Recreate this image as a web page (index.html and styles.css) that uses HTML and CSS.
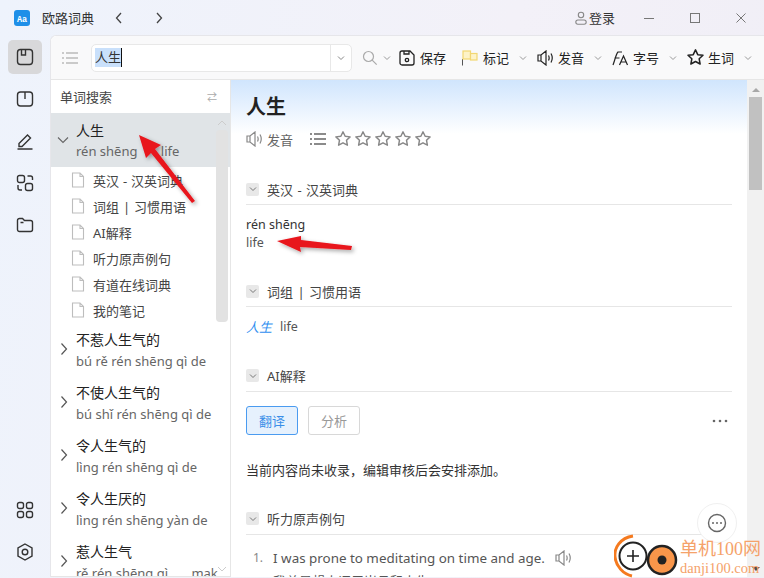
FILE: index.html
```html
<!DOCTYPE html>
<html lang="zh">
<head>
  <meta charset="UTF-8" />
  <title>欧路词典</title>
  <link rel="stylesheet" href="styles.css">
</head>
<body>
  <svg class="defs" width="0" height="0">
    <symbol id="star" viewBox="0 0 16 16"><path d="M8 1.600l1.900 4 4.400.5-3.200 3 .8 4.400L8 11.400l-3.900 2.100.8-4.400-3.200-3 4.400-.5z" fill="none" stroke="currentColor" stroke-width="1.300" stroke-linejoin="round"/></symbol>
    <symbol id="chev" viewBox="0 0 10 10"><path d="M2 3.500l3 3 3-3" fill="none" stroke="currentColor" stroke-width="1"/></symbol>
    <symbol id="doc" viewBox="0 0 14 16"><path d="M1.500 1h7.500l3.500 3.500v10.500h-11z M9 1v3.500h3.500" fill="none" stroke="#bdbdbd" stroke-width="1.100"/></symbol>
    <symbol id="right" viewBox="0 0 10 14"><path d="M2.500 1.500l5 5.500-5 5.500" fill="none" stroke="#555" stroke-width="1.200"/></symbol>
    <symbol id="speaker" viewBox="0 0 17 16"><path d="M1 5h3l5-4v14l-5-4H1z M4 5v6 M11.500 5.500c.8 1.500.8 3.500 0 5 M14 3.500c1.500 2.700 1.500 6.300 0 9" fill="none" stroke="currentColor" stroke-width="1.200"/></symbol>
  </svg>

  <header class="titlebar">
    <svg class="logo" width="16" height="16" viewBox="0 0 16 16"><rect width="16" height="16" rx="3" fill="#1e8fe8"/><text x="8" y="11.500" font-size="8.500" font-family="Liberation Mono" font-weight="700" text-anchor="middle" fill="#fff">Aa</text></svg>
    <span class="app-name">欧路词典</span>
    <svg class="nav-arrow first" width="10" height="14" viewBox="0 0 10 14"><path d="M7 2l-4.500 5 4.500 5" fill="none" stroke="#444" stroke-width="1.300"/></svg>
    <svg class="nav-arrow" width="10" height="14" viewBox="0 0 10 14"><path d="M3 2l4.500 5-4.500 5" fill="none" stroke="#444" stroke-width="1.300"/></svg>
    <span class="spacer"></span>
    <svg width="14" height="14" viewBox="0 0 14 14"><circle cx="7" cy="4" r="2.700" fill="none" stroke="#888" stroke-width="1.100"/><rect x="1.800" y="9" width="10.400" height="4.200" rx="2.100" fill="none" stroke="#888" stroke-width="1.100"/></svg>
    <span class="login">登录</span>
    <svg class="win-btn" width="12" height="12" viewBox="0 0 12 12"><path d="M1 6.500h10" stroke="#777" stroke-width="1"/></svg>
    <svg class="win-btn" width="12" height="12" viewBox="0 0 12 12"><rect x="1.500" y="1.500" width="9" height="9" fill="none" stroke="#777" stroke-width="1"/></svg>
    <svg class="win-btn" width="12" height="12" viewBox="0 0 12 12"><path d="M1.500 1.500l9 9M10.500 1.500l-9 9" stroke="#777" stroke-width="1"/></svg>
  </header>

  <div class="shell">
    <nav class="rail">
      <div class="rail-btn active"><svg width="18" height="18" viewBox="0 0 18 18"><rect x="1.500" y="1.500" width="15" height="15" rx="3" fill="none" stroke="#333" stroke-width="1.400"/><path d="M5.500 2v5h4V2" fill="none" stroke="#333" stroke-width="1.400"/></svg></div>
      <div class="rail-btn"><svg width="18" height="18" viewBox="0 0 18 18"><rect x="1.500" y="2" width="15" height="14" rx="3" fill="none" stroke="#333" stroke-width="1.400"/><path d="M9 2v7" stroke="#333" stroke-width="1.400"/></svg></div>
      <div class="rail-btn"><svg width="18" height="18" viewBox="0 0 18 18"><path d="M3 11.500L11.500 3l3 3L6 14.500H3z M1.500 17h15" fill="none" stroke="#333" stroke-width="1.400"/></svg></div>
      <div class="rail-btn"><svg width="18" height="18" viewBox="0 0 18 18"><rect x="1.500" y="1.500" width="7" height="7" rx="2" fill="none" stroke="#333" stroke-width="1.400"/><path d="M11.500 2h3a2 2 0 0 1 2 2v2 M2 11v3a2 2 0 0 0 2 2h2" fill="none" stroke="#333" stroke-width="1.400"/><rect x="9.500" y="9.500" width="7" height="7" rx="2" fill="none" stroke="#333" stroke-width="1.400"/></svg></div>
      <div class="rail-btn"><svg width="18" height="18" viewBox="0 0 18 18"><path d="M1.500 4.500a2 2 0 0 1 2-2h3l2 2h6a2 2 0 0 1 2 2v7a2 2 0 0 1-2 2h-11a2 2 0 0 1-2-2z M4.500 6.500h3" fill="none" stroke="#333" stroke-width="1.400"/></svg></div>
      <div class="spacer"></div>
      <div class="rail-btn"><svg width="18" height="18" viewBox="0 0 18 18"><g fill="none" stroke="#333" stroke-width="1.400"><rect x="1.500" y="1.500" width="6" height="6" rx="2"/><rect x="10.500" y="1.500" width="6" height="6" rx="2"/><rect x="1.500" y="10.500" width="6" height="6" rx="2"/><rect x="10.500" y="10.500" width="6" height="6" rx="2"/></g></svg></div>
      <div class="rail-btn"><svg width="18" height="18" viewBox="0 0 18 18"><path d="M9 1l7 4v8l-7 4-7-4V5z" fill="none" stroke="#333" stroke-width="1.400"/><circle cx="9" cy="9" r="2.800" fill="none" stroke="#333" stroke-width="1.400"/></svg></div>
    </nav>

    <main class="panel">
      <div class="toolbar">
        <svg class="list-icon" width="16" height="12" viewBox="0 0 16 12"><path d="M0 1h2M4 1h12M0 6h2M4 6h12M0 11h2M4 11h12" stroke="#bbb" stroke-width="1.300"/></svg>
        <div class="search">
          <span class="search-text"><span class="sel">人生</span></span>
          <span class="search-drop"><svg width="10" height="10"><use href="#chev"/></svg></span>
        </div>
        <svg class="magnifier" width="16" height="16" viewBox="0 0 16 16"><circle cx="6.500" cy="6.500" r="5" fill="none" stroke="#aaa" stroke-width="1.200"/><path d="M10.200 10.200l4.500 4.500" stroke="#aaa" stroke-width="1.200"/></svg>
        <svg class="search-chev" width="10" height="10"><use href="#chev"/></svg>
        <div class="tool tool-save"><svg width="16" height="16" viewBox="0 0 16 16"><path d="M1 3a2 2 0 0 1 2-2h8l4 4v8a2 2 0 0 1-2 2H3a2 2 0 0 1-2-2z M5 1v3h5V1" fill="none" stroke="#222" stroke-width="1.300"/><circle cx="8" cy="10" r="1.700" fill="none" stroke="#222" stroke-width="1.300"/></svg><span>保存</span></div>
        <div class="tool"><svg width="16" height="16" viewBox="0 0 16 16"><path d="M.5 9v6.500" stroke="#555" stroke-width="1"/><rect x="1" y="1" width="7.500" height="8" fill="#fdf3c8" stroke="#f2d772" stroke-width="1.200"/><rect x="8.500" y="3.500" width="6.500" height="6.500" fill="#fdf3c8" stroke="#f2d772" stroke-width="1.200"/></svg><span>标记</span></div>
        <svg class="tool-chev" width="10" height="10"><use href="#chev"/></svg>
        <div class="tool"><svg width="17" height="16" class="dark"><use href="#speaker"/></svg><span>发音</span></div>
        <svg class="tool-chev" width="10" height="10"><use href="#chev"/></svg>
        <div class="tool"><svg width="17" height="16" viewBox="0 0 17 16"><path d="M1 15C3 10 4 4 6 2h4 M2.500 8h5 M7.500 15l4-9 4 9 M9 12h5" fill="none" stroke="#222" stroke-width="1.200"/></svg><span>字号</span></div>
        <svg class="tool-chev" width="10" height="10"><use href="#chev"/></svg>
        <div class="tool tool-star"><svg width="19" height="19" class="dark"><use href="#star"/></svg><span>生词</span></div>
        <svg class="tool-chev" width="10" height="10"><use href="#chev"/></svg>
      </div>

      <div class="columns">
        <aside class="sidebar">
          <div class="side-head"><span>单词搜索</span><span class="swap">⇄</span></div>
          <div class="word-list">
            <div class="word open">
              <svg class="arrow-down" width="12" height="12" viewBox="0 0 12 12"><path d="M1 3.500l5 5 5-5" fill="none" stroke="#666" stroke-width="1.100"/></svg>
              <div class="word-title">人生</div>
              <div class="word-sub">rén shēng <span class="gap">life</span></div>
            </div>
            <div class="sub-row"><svg width="14" height="16"><use href="#doc"/></svg>英汉 - 汉英词典</div>
            <div class="sub-row"><svg width="14" height="16"><use href="#doc"/></svg>词组 | 习惯用语</div>
            <div class="sub-row"><svg width="14" height="16"><use href="#doc"/></svg>AI解释</div>
            <div class="sub-row"><svg width="14" height="16"><use href="#doc"/></svg>听力原声例句</div>
            <div class="sub-row"><svg width="14" height="16"><use href="#doc"/></svg>有道在线词典</div>
            <div class="sub-row"><svg width="14" height="16"><use href="#doc"/></svg>我的笔记</div>
            <div class="word"><svg class="arrow-right" width="10" height="14"><use href="#right"/></svg><div class="word-title">不惹人生气的</div><div class="word-sub">bú rě rén shēng qì de</div></div>
            <div class="word"><svg class="arrow-right" width="10" height="14"><use href="#right"/></svg><div class="word-title">不使人生气的</div><div class="word-sub">bú shǐ rén shēng qì de</div></div>
            <div class="word"><svg class="arrow-right" width="10" height="14"><use href="#right"/></svg><div class="word-title">令人生气的</div><div class="word-sub">lìng rén shēng qì de</div></div>
            <div class="word"><svg class="arrow-right" width="10" height="14"><use href="#right"/></svg><div class="word-title">令人生厌的</div><div class="word-sub">lìng rén shēng yàn de</div></div>
            <div class="word"><svg class="arrow-right" width="10" height="14"><use href="#right"/></svg><div class="word-title">惹人生气</div><div class="word-sub">rě rén shēng qì <span class="gap-small">mak</span></div></div>
          </div>
          <div class="side-scroll">
            <svg class="scroll-up" width="10" height="10" viewBox="0 0 10 10"><path d="M1 7l4-4 4 4" fill="none" stroke="#ccc" stroke-width="1"/></svg>
            <div class="side-thumb"></div>
            <span class="spacer"></span>
            <svg width="10" height="10" viewBox="0 0 10 10"><path d="M1 3l4 4 4-4" fill="none" stroke="#ccc" stroke-width="1"/></svg>
          </div>
        </aside>

        <section class="content">
          <div class="content-inner">
            <h1 class="headword">人生</h1>
            <div class="head-tools">
              <svg width="17" height="16" class="grey"><use href="#speaker"/></svg>
              <span class="say">发音</span>
              <svg class="lines" width="16" height="12" viewBox="0 0 16 12"><path d="M0 1h2M4 1h12M0 6h2M4 6h12M0 11h2M4 11h12" stroke="#666" stroke-width="1.400"/></svg>
              <div class="stars">
                <svg width="18" height="18"><use href="#star"/></svg>
                <svg width="18" height="18"><use href="#star"/></svg>
                <svg width="18" height="18"><use href="#star"/></svg>
                <svg width="18" height="18"><use href="#star"/></svg>
                <svg width="18" height="18"><use href="#star"/></svg>
              </div>
            </div>

            <div class="sec-head first-sec"><span class="toggle"><svg width="10" height="10"><use href="#chev"/></svg></span>英汉 - 汉英词典</div>
            <div class="sec-body pron"><div>rén shēng</div><div class="life">life</div></div>

            <div class="sec-head"><span class="toggle"><svg width="10" height="10"><use href="#chev"/></svg></span>词组 | 习惯用语</div>
            <div class="sec-body phrase"><a class="phrase-link">人生</a><span class="life">life</span></div>

            <div class="sec-head ai-head"><span class="toggle"><svg width="10" height="10"><use href="#chev"/></svg></span>AI解释</div>
            <div class="ai-tabs">
              <span class="tab on">翻译</span>
              <span class="tab">分析</span>
              <span class="spacer"></span>
              <svg class="more" width="16" height="4" viewBox="0 0 16 4"><circle cx="2" cy="2" r="1.300" fill="#666"/><circle cx="8" cy="2" r="1.300" fill="#666"/><circle cx="14" cy="2" r="1.300" fill="#666"/></svg>
            </div>
            <p class="ai-note">当前内容尚未收录，编辑审核后会安排添加。</p>

            <div class="sec-head listen-head"><span class="toggle"><svg width="10" height="10"><use href="#chev"/></svg></span>听力原声例句</div>
            <div class="example">
              <span class="num">1.</span>
              <div>
                <div class="en">I was prone to meditating on time and age. <svg width="17" height="16" class="grey"><use href="#speaker"/></svg></div>
                <div class="zh">我总是想人评用岁月和人生</div>
              </div>
            </div>
          </div>
          <div class="page-scroll">
            <svg width="10" height="8" viewBox="0 0 10 8"><path d="M1 6l4-4 4 4z" fill="#a8a8a8"/></svg>
            <div class="page-thumb"></div>
            <span class="spacer"></span>
            <svg class="page-down" width="10" height="8" viewBox="0 0 10 8"><path d="M1 2l4 4 4-4z" fill="#505050"/></svg>
          </div>
        </section>
      </div>
    </main>
  </div>

  <!-- overlays: annotation arrows, chat button, watermark -->
  <svg class="overlay" width="764" height="578" viewBox="0 0 764 578">
    <defs><filter id="soft" x="-20%" y="-20%" width="140%" height="140%"><feDropShadow dx="2" dy="2" stdDeviation="2" flood-color="#000" flood-opacity=".35"/></filter></defs>
    <g fill="#e8141c" filter="url(#soft)">
      <path d="M139 135l22 10-6 4 40 52-3 2-41-50-5 5z"/>
      <path d="M277 241l24-5 0 4 51 6-1 4-51-3 1 5z"/>
    </g>
  </svg>
  <div class="chat-btn"><svg width="20" height="20" viewBox="0 0 20 20"><circle cx="10" cy="10" r="8.500" fill="none" stroke="#666" stroke-width="1.400"/><circle cx="6" cy="10" r="1" fill="#666"/><circle cx="10" cy="10" r="1" fill="#666"/><circle cx="14" cy="10" r="1" fill="#666"/></svg></div>
  <div class="watermark">
    <svg width="64" height="44" viewBox="0 0 64 44">
      <path d="M19 2C6 4 0 14 1 23c1 9 8 17 17 19" fill="none" stroke="#f57a1f" stroke-width="3"/>
      <circle cx="19" cy="22" r="13.500" fill="#fff" stroke="#222" stroke-width="2"/>
      <path d="M19 16v12M13 22h12" stroke="#222" stroke-width="1.600"/>
      <circle cx="48" cy="26" r="14" fill="#f9964a" stroke="#222" stroke-width="2.500"/>
      <circle cx="48" cy="26" r="4.500" fill="#222"/>
    </svg>
    <div class="wm-text"><div class="wm-cn">单机100网</div><div class="wm-url">danji100.com</div></div>
  </div>
</body>
</html>
```

FILE: styles.css
```css
* { margin: 0; padding: 0; box-sizing: border-box; }
html, body { width: 764px; height: 578px; overflow: hidden; }
body {
  font-family: "Noto Sans", "Noto Sans CJK SC", sans-serif;
  font-size: 13px;
  color: #333;
  background: linear-gradient(100deg, #eef3fc 0%, #f3f1f8 60%, #f0eef6 100%);
  display: flex;
  flex-direction: column;
}
svg { display: block; flex: none; }
.defs { position: absolute; }
.spacer { flex: 1; }

.titlebar {
  height: 35px;
  flex: none;
  display: flex;
  align-items: center;
  padding-left: 14px;
  padding-right: 17px;
}
.app-name { margin-left: 12px; color: #333; }
.nav-arrow { margin-left: 30px; }
.nav-arrow.first { margin-left: 20px; }
.login { margin-left: 1px; margin-right: 28px; }
.win-btn { margin-left: 34px; }
.login + .win-btn { margin-left: 0; }

.shell { flex: 1; display: flex; min-height: 0; padding-bottom: 1px; }
.rail {
  width: 50px;
  flex: none;
  display: flex;
  flex-direction: column;
  align-items: center;
  padding-top: 5px;
}
.rail-btn {
  width: 34px;
  height: 34px;
  margin-bottom: 8px;
  border-radius: 5px;
  display: flex;
  align-items: center;
  justify-content: center;
}
.rail-btn.active { background: #d8d8da; }

.panel {
  flex: 1;
  min-width: 0;
  display: flex;
  flex-direction: column;
  background: #fff;
  border-left: 1px solid #e6e6ea;
  border-top: 1px solid #e6e6ea;
  border-top-left-radius: 6px;
}
.toolbar {
  height: 44px;
  flex: none;
  display: flex;
  align-items: center;
  background: #f9f9fa;
  border-bottom: 1px solid #e6e6e6;
  padding-left: 11px;
  border-top-left-radius: 6px;
}
.list-icon { margin-right: 13px; }
.search {
  width: 261px;
  height: 28px;
  display: flex;
  background: #fff;
  border: 1px solid #e8e8e8;
  border-radius: 5px;
  margin-right: 10px;
}
.search-text { flex: 1; padding-left: 3px; display: flex; align-items: center; }
.sel { background: #c9e0fb; border-right: 1px solid #111; line-height: 19px; }
.search-drop {
  width: 21px;
  display: flex;
  align-items: center;
  justify-content: center;
  border-left: 1px solid #e8e8e8;
  color: #888;
}
.search-chev { color: #999; margin: 0 7px 0 4px; }
.tool {
  width: 47px;
  display: flex;
  align-items: center;
  justify-content: space-between;
  color: #222;
  white-space: nowrap;
}
.tool-save { margin-right: 16px; }
.tool-star { width: 48px; margin-left: -1px; }
.tool-chev { color: #999; margin: 0 9px; }
.dark { color: #222; }
.grey { color: #888; }

.columns { flex: 1; display: flex; min-height: 0; }
.sidebar {
  width: 180px;
  flex: none;
  position: relative;
  border-right: 1px solid #e6e6e6;
  border-bottom: 1px solid #e6e6e6;
  overflow: hidden;
}
.side-head {
  height: 33px;
  display: flex;
  align-items: center;
  justify-content: space-between;
  padding: 0 13px 0 9px;
  color: #444;
}
.swap { font-size: 10px; color: #aaa; }
.word-list { overflow: hidden; height: 464px; }
.word {
  position: relative;
  height: 53px;
  padding: 6px 0 0 25px;
  white-space: nowrap;
}
.word.open { height: 54px; background: #e0e4e7; padding-top: 8px; }
.word.open .word-title { line-height: 20px; margin-bottom: 0; }
.word-title { font-size: 14px; line-height: 21px; margin-bottom: 1px; color: #222; }
.word-sub { line-height: 21px; color: #666; font-size: 13px; }
.gap { margin-left: 20px; }
.gap-small { margin-left: 20px; }
.arrow-down { position: absolute; left: 6px; top: 21px; }
.arrow-right { position: absolute; left: 8px; top: 19px; }
.sub-row {
  height: 26px;
  display: flex;
  align-items: center;
  gap: 8px;
  padding-left: 20px;
  color: #444;
  white-space: nowrap;
  word-spacing: .5px;
}
.side-scroll {
  position: absolute;
  right: 1px;
  top: 33px;
  bottom: 0;
  width: 14px;
  display: flex;
  flex-direction: column;
  align-items: center;
  padding: 5px 0 2px;
}
.side-thumb {
  width: 12px;
  height: 192px;
  margin-top: 2px;
  background: #e2e2e2;
  border-radius: 4px;
}

.content { flex: 1; min-width: 0; display: flex; }
.content-inner {
  flex: 1;
  min-width: 0;
  padding: 12px 15px 0;
  overflow: hidden;
  background: linear-gradient(180deg, #d0e5fd 0, #ffffff 54px);
}
.headword { font-size: 20px; line-height: 30px; font-weight: 700; color: #222; }
.head-tools { display: flex; align-items: center; height: 20px; margin-top: 7px; }
.say { margin-left: 4px; color: #666; }
.lines { margin-left: 17px; }
.stars { display: flex; gap: 2px; margin-left: 8px; color: #888; }

.sec-head {
  display: flex;
  align-items: center;
  height: 32px;
  padding-top: 1px;
  border-bottom: 1px solid #e6e6e6;
  color: #444;
  gap: 8px;
  margin-top: 20px;
  word-spacing: 1px;
}
.ai-head, .listen-head { padding-top: 0; }
.first-sec { margin-top: 24px; }
.toggle {
  width: 13px;
  height: 13px;
  background: #e8e8e8;
  border-radius: 2px;
  display: flex;
  align-items: center;
  justify-content: center;
  color: #777;
}
.pron { padding-top: 11px; line-height: 18px; color: #333; height: 70px; font-size: 12.500px; }
.pron + .sec-head { margin-top: 0; }
.life { color: #555; font-size: 12.500px; }
.phrase { height: 53px; padding-top: 11px; line-height: 18px; display: flex; gap: 8px; }
.phrase + .sec-head { margin-top: 0; }
.phrase-link { color: #2f8ff0; font-style: italic; }
.ai-tabs { display: flex; align-items: center; gap: 10px; margin-top: 14px; height: 29px; }
.tab {
  width: 52px;
  height: 29px;
  display: flex;
  align-items: center;
  justify-content: center;
  border: 1px solid #d8d8d8;
  border-radius: 3px;
  color: #999;
}
.tab.on { background: #e6f1fd; border-color: #4a9bf0; color: #3a8ee8; }
.more { margin-right: 4px; }
.ai-note { margin-top: 25px; line-height: 20px; color: #333; }
.listen-head { margin-top: 23px; }
.example { display: flex; gap: 10px; padding: 13px 0 0 7px; line-height: 20px; }
.num { color: #888; font-size: 12px; }
.en { display: flex; align-items: center; gap: 10px; color: #555; font-size: 13.400px; white-space: nowrap; }
.zh { color: #555; margin-top: 3px; }

.page-scroll {
  width: 17px;
  flex: none;
  background: #f1f1f1;
  display: flex;
  flex-direction: column;
  align-items: center;
  padding: 6px 0 4px;
}
.page-thumb { width: 13px; height: 93px; margin-top: 3px; background: #c1c1c1; }

.overlay { position: absolute; left: 0; top: 0; pointer-events: none; }
.chat-btn {
  position: absolute;
  left: 697px;
  top: 503px;
  width: 40px;
  height: 40px;
  border-radius: 50%;
  background: #fff;
  border: 1px solid #f0f0f0;
  display: flex;
  align-items: center;
  justify-content: center;
}
.watermark {
  position: absolute;
  left: 614px;
  top: 534px;
  display: flex;
  align-items: flex-start;
  gap: 2px;
}
.wm-text { color: #f5a26a; margin-top: 5px; }
.wm-cn { font-size: 18px; line-height: 20px; white-space: nowrap; font-family: "Liberation Serif", "Noto Sans CJK SC", serif; }
.wm-url { font-size: 14.500px; line-height: 18px; font-family: "Liberation Serif", serif; }
```
